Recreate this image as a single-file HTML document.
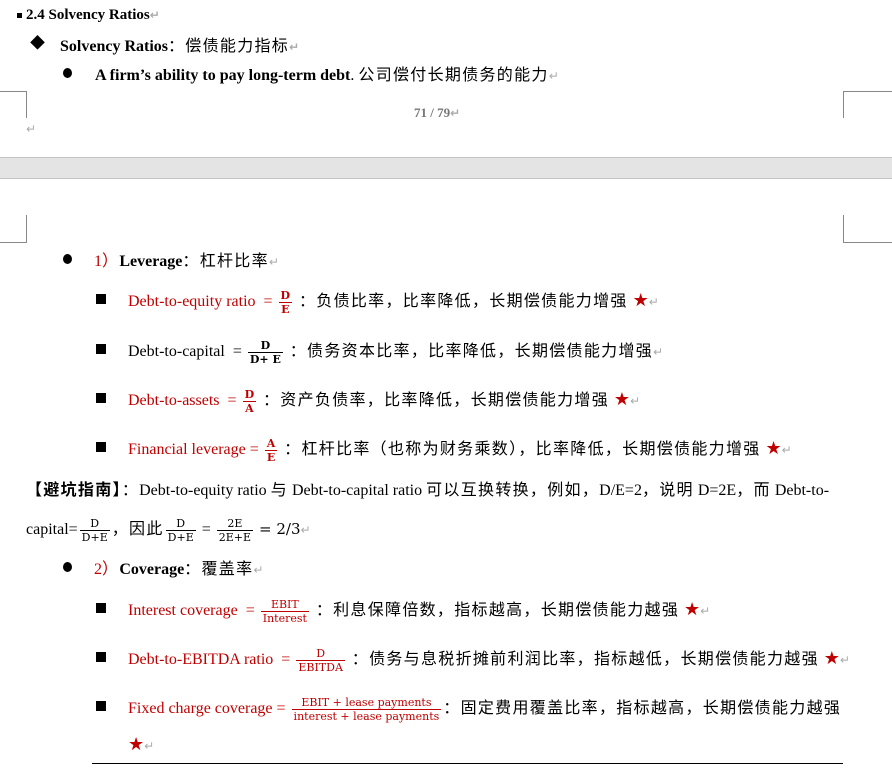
<!DOCTYPE html>
<html><head><meta charset="utf-8"><style>
body{margin:0;width:892px;height:770px;background:#fff;position:relative;overflow:hidden;font-family:"Liberation Serif","Noto Sans CJK SC",serif;font-size:16px;color:#000}
.l{position:absolute;white-space:nowrap;height:20px;line-height:20px}
.cj{font-family:"Noto Sans CJK SC",sans-serif;font-size:16px;letter-spacing:1.3px}
.r{color:#c00000}
.ret{color:#aaa;font-size:12px;font-family:"DejaVu Sans",sans-serif;letter-spacing:0}
.star{color:#c00000;font-size:18px;font-family:"DejaVu Sans",sans-serif}
.fr{display:inline-block;vertical-align:middle;text-align:center;font-size:11px;line-height:13px;font-family:"DejaVu Serif",serif;font-weight:bold;margin:0 2px}
.fr span{display:block;padding:0 2px}
.fr span:first-child{border-bottom:1px solid currentColor}
.fr.n{font-weight:normal}
.b{font-weight:bold}
.sq{display:inline-block;width:10px;height:10px;background:#000;position:absolute;left:96px;top:5px}
.dot{position:absolute;left:63px;top:5px;width:9px;height:10px;border-radius:50%;background:#000}
.h{position:absolute;background:#888}
</style></head><body>
<div class="l b" style="left:17px;top:5px;font-size:15px"><span style="display:inline-block;width:5px;height:5px;background:#000;vertical-align:middle;margin-right:4px"></span>2.4 Solvency Ratios<span class="ret">↵</span></div>
<div class="l" style="left:30px;top:34px"><span style="position:absolute;left:0;top:0px;font-size:15px">◆</span><span style="position:absolute;left:30px" class="b">Solvency Ratios<span class="cj" style="font-weight:normal">：偿债能力指标</span><span class="ret">↵</span></span></div>
<div class="l" style="left:0;top:63px;width:800px"><div class="dot"></div><span style="position:absolute;left:95px"><b>A firm’s ability to pay long-term debt</b>. <span class="cj">公司偿付长期债务的能力</span><span class="ret">↵</span></span></div>
<div class="h" style="left:0;top:91px;width:26px;height:1px"></div>
<div class="h" style="left:26px;top:91px;width:1px;height:27px"></div>
<div class="h" style="left:843px;top:91px;width:49px;height:1px"></div>
<div class="h" style="left:843px;top:91px;width:1px;height:27px"></div>
<div class="l b" style="left:414px;top:103px;color:#777;font-size:13px">71 / 79<span class="ret">↵</span></div>
<div class="l ret" style="left:26px;top:119px">↵</div>
<div style="position:absolute;left:0;top:157px;width:892px;height:20px;background:#e4e4e4;border-top:1px solid #c4c4c4;border-bottom:1px solid #c4c4c4"></div>
<div class="h" style="left:26px;top:215px;width:1px;height:27px"></div>
<div class="h" style="left:0;top:242px;width:27px;height:1px"></div>
<div class="h" style="left:843px;top:215px;width:1px;height:27px"></div>
<div class="h" style="left:843px;top:242px;width:49px;height:1px"></div>
<div class="l" style="left:0;top:249px;width:800px"><div class="dot"></div><span style="position:absolute;left:94px"><span class="r">1<span class="cj">）</span></span><b>Leverage</b><span class="cj">：杠杆比率</span><span class="ret">↵</span></span></div>
<div class="l" style="left:0;top:289px;width:892px"><div class="sq"></div><span style="position:absolute;left:128px;top:0"><span class="r">Debt-to-equity ratio &nbsp;= <span class="fr"><span>D</span><span>E</span></span></span><span class="cj"> ：负债比率，比率降低，长期偿债能力增强 </span><span class="star">★</span><span class="ret">↵</span></span></div>
<div class="l" style="left:0;top:339px;width:892px"><div class="sq"></div><span style="position:absolute;left:128px;top:0">Debt-to-capital &nbsp;= <span class="fr"><span>D</span><span>D+ E</span></span><span class="cj"> ：债务资本比率，比率降低，长期偿债能力增强</span><span class="ret">↵</span></span></div>
<div class="l" style="left:0;top:388px;width:892px"><div class="sq"></div><span style="position:absolute;left:128px;top:0"><span class="r">Debt-to-assets &nbsp;= <span class="fr"><span>D</span><span>A</span></span></span><span class="cj"> ：资产负债率，比率降低，长期偿债能力增强 </span><span class="star">★</span><span class="ret">↵</span></span></div>
<div class="l" style="left:0;top:437px;width:892px"><div class="sq"></div><span style="position:absolute;left:128px;top:0"><span class="r">Financial leverage = <span class="fr"><span>A</span><span>E</span></span></span><span class="cj"> ：杠杆比率（也称为财务乘数），比率降低，长期偿债能力增强 </span><span class="star">★</span><span class="ret">↵</span></span></div>
<div class="l" style="left:26px;top:478px"><b class="cj">【避坑指南】</b><span class="cj">：</span>Debt-to-equity ratio <span class="cj">与</span> Debt-to-capital ratio <span class="cj">可以互换转换，例如，</span>D/E=2<span class="cj">，说明</span> D=2E<span class="cj">，而</span> Debt-to-</div>
<div class="l" style="left:26px;top:517px">capital=<span class="fr n"><span>D</span><span>D+E</span></span><span class="cj">，因此</span><span class="fr n"><span>D</span><span>D+E</span></span> = <span class="fr n"><span>2E</span><span>2E+E</span></span> <span style="font-family:'DejaVu Serif',serif;font-size:15px">= 2/3</span><span class="ret">↵</span></div>
<div class="l" style="left:0;top:557px;width:800px"><div class="dot"></div><span style="position:absolute;left:94px"><span class="r">2<span class="cj">）</span></span><b>Coverage</b><span class="cj">：覆盖率</span><span class="ret">↵</span></span></div>
<div class="l" style="left:0;top:598px;width:892px"><div class="sq"></div><span style="position:absolute;left:128px;top:0"><span class="r">Interest coverage &nbsp;= <span class="fr n"><span>EBIT</span><span>Interest</span></span></span><span class="cj"> ：利息保障倍数，指标越高，长期偿债能力越强 </span><span class="star">★</span><span class="ret">↵</span></span></div>
<div class="l" style="left:0;top:647px;width:892px"><div class="sq"></div><span style="position:absolute;left:128px;top:0"><span class="r">Debt-to-EBITDA ratio &nbsp;= <span class="fr n"><span>D</span><span>EBITDA</span></span></span><span class="cj"> ：债务与息税折摊前利润比率，指标越低，长期偿债能力越强 </span><span class="star">★</span><span class="ret">↵</span></span></div>
<div class="l" style="left:0;top:696px;width:892px"><div class="sq"></div><span style="position:absolute;left:128px;top:0"><span class="r">Fixed charge coverage = <span class="fr n"><span>EBIT + lease payments</span><span>interest + lease payments</span></span></span><span class="cj">：固定费用覆盖比率，指标越高，长期偿债能力越强</span></span></div>
<div class="l" style="left:128px;top:735px"><span class="star">★</span><span class="ret">↵</span></div>
<div style="position:absolute;left:92px;top:763px;width:751px;height:1px;background:#000"></div>
</body></html>
